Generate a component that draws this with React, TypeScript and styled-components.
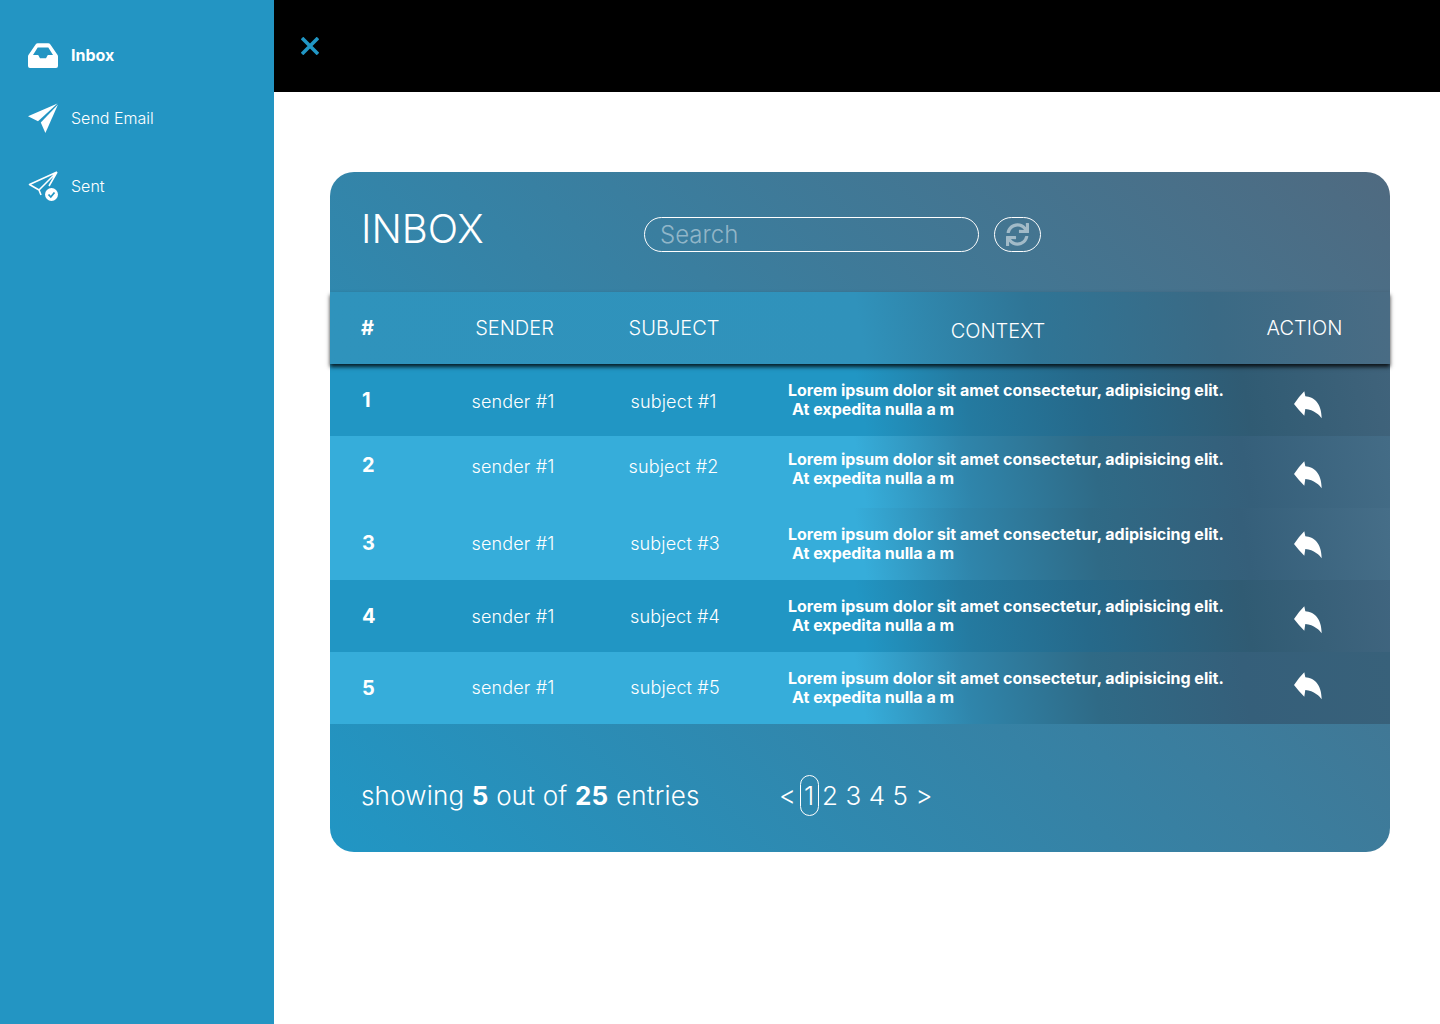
import React from 'react';
import styled, { createGlobalStyle } from 'styled-components';
import { FaSync } from 'react-icons/fa';

// small per-row offsets, the rows in the design are not quite even
const rows = [
  { id: 1, subject: 'subject #1', light: false, end: '#40637b', numLift: 0, textLift: -2, contextLift: 0, actionLift: 0, subjectPad: 0 },
  { id: 2, subject: 'subject #2', light: true, end: '#446c86', numLift: 14, textLift: 12, contextLift: 6, actionLift: 4, subjectPad: 0 },
  { id: 3, subject: 'subject #3', light: true, end: '#466e88', numLift: 2, textLift: 2, contextLift: 0, actionLift: 8, subjectPad: 3 },
  { id: 4, subject: 'subject #4', light: false, end: '#40657f', numLift: 0, textLift: 0, contextLift: 0, actionLift: 2, subjectPad: 3 },
  { id: 5, subject: 'subject #5', light: true, end: '#38617a', numLift: 0, textLift: 2, contextLift: 0, actionLift: 14, subjectPad: 3 },
];

function InboxIcon() {
  return (
    <svg width="30" height="25" viewBox="0 0 30 25" fill="#fff">
      <path
        fillRule="evenodd"
        d="M0 13.5 Q0 12.5 .6 11.7 L7.6 1.4 Q8.4 .3 9.8 .3 H20.2 Q21.6 .3 22.4 1.4 L29.4 11.7 Q30 12.5 30 13.5 V23 Q30 25 28 25 H2 Q0 25 0 23 Z M9.7 4.5 L5 12 H10.2 L12 15.2 H18 L19.8 12 H25 L20.3 4.5 Z"
      />
    </svg>
  );
}

function SendIcon() {
  return (
    <svg width="30" height="30" viewBox="0 0 30 30" fill="#fff">
      <path d="M29.5 .5 L0 13.3 L10 18.3 Z" />
      <path d="M30 1.5 L12.8 19.6 L17.4 30 Z" />
    </svg>
  );
}

function SentIcon() {
  return (
    <svg width="30" height="30" viewBox="0 0 30 30" fill="none">
      <path
        d="M29 1 L1.5 13.5 L11 19 M29 1 L11 19 L13 24 M29 1 L21 15"
        stroke="#fff"
        strokeWidth="1.6"
        strokeLinejoin="round"
      />
      <circle cx="23.5" cy="23.5" r="6.5" fill="#fff" />
      <path d="M20.5 23.5 L22.8 26 L26.5 21.5" stroke="#2196C4" strokeWidth="1.8" />
    </svg>
  );
}

function CloseIcon() {
  return (
    <svg width="18" height="18" viewBox="0 0 18 18" stroke="#2196C4" strokeWidth="3.6">
      <path d="M1 1 L17 17 M17 1 L1 17" />
    </svg>
  );
}

function ReplyIcon() {
  return (
    <svg width="28" height="28" viewBox="0 0 28 28" fill="#fff">
      <path d="M0 13 Q5 5.5 10.3 .3 L11.3 5.3 C20 6 27.5 12 27.7 27.3 C26 24.7 20 18.6 11.3 18 L10.3 24.7 Q5 19.5 0 13 Z" />
    </svg>
  );
}

export default function App() {
  return (
    <Page>
      <Global />
      <Sidebar>
        <NavItem $height={64} $active>
          <IconSlot><InboxIcon /></IconSlot>
          Inbox
        </NavItem>
        <NavItem $height={62}>
          <IconSlot><SendIcon /></IconSlot>
          Send Email
        </NavItem>
        <NavItem $height={74}>
          <IconSlot><SentIcon /></IconSlot>
          Sent
        </NavItem>
      </Sidebar>
      <Main>
        <TopBar>
          <CloseIcon />
        </TopBar>
        <Content>
          <Card>
            <CardHead>
              <Title>INBOX</Title>
              <SearchBox>Search</SearchBox>
              <RefreshButton><FaSync size={23} color="#fff" /></RefreshButton>
            </CardHead>
            <HeadRow>
              <HashCell>#</HashCell>
              <HeadCell>SENDER</HeadCell>
              <HeadCell>SUBJECT</HeadCell>
              <ContextHead>CONTEXT</ContextHead>
              <ActionHead>ACTION</ActionHead>
            </HeadRow>
            {rows.map((row) => (
              <Row key={row.id} $light={row.light} $end={row.end}>
                <NumCell $lift={row.numLift}>{row.id}</NumCell>
                <BodyCell $lift={row.textLift}>sender #1</BodyCell>
                <SubjectCell $lift={row.textLift} $pad={row.subjectPad}>{row.subject}</SubjectCell>
                <ContextCell $lift={row.contextLift}>
                  Lorem ipsum dolor sit amet consectetur, adipisicing elit.
                  <br />
                  <span>At expedita nulla a m</span>
                </ContextCell>
                <ActionCell $lift={row.actionLift}><ReplyIcon /></ActionCell>
              </Row>
            ))}
            <CardFoot>
              <Showing>
                showing <b>5</b> out of <b>25</b> entries
              </Showing>
              <Pager>
                <span>&lt;</span>
                <CurrentPage>1</CurrentPage>
                <span>2</span>
                <span>3</span>
                <span>4</span>
                <span>5</span>
                <span>&gt;</span>
              </Pager>
            </CardFoot>
          </Card>
        </Content>
      </Main>
    </Page>
  );
}

const Global = createGlobalStyle`
  html, body { margin: 0; padding: 0; background: #fff; }
  body { font-family: Inter, "Liberation Sans", sans-serif; }
`;

const Page = styled.div`
  display: flex;
  width: 1440px;
  height: 1024px;
  overflow: hidden;
`;

const Sidebar = styled.nav`
  width: 274px;
  flex-shrink: 0;
  background: #2395c3;
  padding-top: 23px;
  box-sizing: border-box;
`;

const NavItem = styled.div<{ $height: number; $active?: boolean }>`
  display: flex;
  align-items: center;
  height: ${(p) => p.$height}px;
  padding-left: 28px;
  color: #fff;
  font-size: 16px;
  font-weight: ${(p) => (p.$active ? 700 : 300)};
`;

const IconSlot = styled.span`
  display: flex;
  width: 43px;
  flex-shrink: 0;
`;

const Main = styled.main`
  flex: 1;
  min-width: 0;
`;

const TopBar = styled.header`
  display: flex;
  align-items: center;
  height: 92px;
  padding-left: 27px;
  background: #000;
`;

const Content = styled.div`
  padding: 80px 50px 0 56px;
`;

const Card = styled.section`
  width: 1060px;
  height: 680px;
  border-radius: 24px;
  background: linear-gradient(45deg, #2196c4 0%, #4f6a80 100%);
  color: #fff;
`;

const CardHead = styled.div`
  display: flex;
  align-items: flex-start;
  height: 120px;
  padding: 45px 0 0 31px;
  box-sizing: border-box;
`;

const Title = styled.h1`
  width: 283px;
  height: 24px;
  margin: 0;
  font-size: 40px;
  font-weight: 300;
  line-height: 24px;
`;

const SearchBox = styled.div`
  width: 335px;
  height: 35px;
  box-sizing: border-box;
  border: 1px solid #fff;
  border-radius: 18px;
  padding-left: 15px;
  font-size: 24px;
  font-weight: 300;
  line-height: 33px;
  color: rgba(255, 255, 255, 0.45);
`;

const RefreshButton = styled.div`
  display: flex;
  align-items: center;
  justify-content: center;
  width: 47px;
  height: 35px;
  margin-left: 15px;
  box-sizing: border-box;
  border: 1px solid #fff;
  border-radius: 18px;
  & svg { opacity: 0.5; }
`;

const columns = '100px 169px 150px 1fr 164px';

const HeadRow = styled.div`
  display: grid;
  grid-template-columns: ${columns};
  align-items: center;
  height: 72px;
  background: linear-gradient(80deg, #2f93bc 0%, #3092bb 50%, #2f7596 66%, #3a6a85 83%, #4a6c84 100%);
  box-shadow: 0 3px 4px rgba(0, 0, 0, 0.8);
  position: relative;
`;

const HeadCell = styled.div`
  font-size: 20px;
  font-weight: 300;
  text-align: center;
`;

const HashCell = styled(HeadCell)`
  font-weight: 700;
  text-align: left;
  padding-left: 31px;
`;

const ContextHead = styled(HeadCell)`
  padding: 6px 0 0 21px;
`;

const ActionHead = styled(HeadCell)`
  padding-right: 7px;
`;

const Row = styled.div<{ $light: boolean; $end: string }>`
  display: grid;
  grid-template-columns: ${columns};
  align-items: center;
  height: 72px;
  background: ${(p) =>
    p.$light
      ? `linear-gradient(80deg, #36adda 0%, #36adda 50%, #2f85ab 60%, #2f6a86 72%, #355f7a 86%, ${p.$end} 100%)`
      : `linear-gradient(80deg, #2196c4 0%, #2196c4 50%, #247aa0 60%, #26698a 71%, #305b73 86%, ${p.$end} 100%)`};
`;

const NumCell = styled.div<{ $lift: number }>`
  font-size: 20px;
  font-weight: 700;
  padding: 0 0 ${(p) => p.$lift}px 32px;
`;

const BodyCell = styled.div<{ $lift: number }>`
  font-size: 18px;
  font-weight: 300;
  letter-spacing: 0.15px;
  text-align: center;
  padding-right: 3px;
  margin-bottom: ${(p) => p.$lift}px;
`;

const SubjectCell = styled(BodyCell)<{ $pad: number }>`
  padding: 0 1px 0 ${(p) => p.$pad}px;
`;

const ContextCell = styled.div<{ $lift: number }>`
  padding: 0 0 ${(p) => p.$lift}px 39px;
  font-size: 16px;
  font-weight: 700;
  line-height: 19px;
  & span { margin-left: 4px; }
`;

const ActionCell = styled.div<{ $lift: number }>`
  display: flex;
  justify-content: center;
  padding: 10px 0 ${(p) => p.$lift}px;
`;

const CardFoot = styled.div`
  display: flex;
  align-items: center;
  height: 128px;
  box-sizing: border-box;
  padding: 15px 0 0 31px;
`;

const Showing = styled.div`
  width: 418px;
  font-size: 26px;
  font-weight: 300;
  letter-spacing: 0.2px;
  & b { font-weight: 700; }
`;

const Pager = styled.div`
  display: flex;
  align-items: center;
  gap: 7.5px;
  font-size: 26px;
  font-weight: 300;
`;

const CurrentPage = styled.span`
  width: 17px;
  height: 39px;
  margin: 0 -4px;
  line-height: 39px;
  text-align: center;
  border: 1px solid #fff;
  border-radius: 10px;
`;
